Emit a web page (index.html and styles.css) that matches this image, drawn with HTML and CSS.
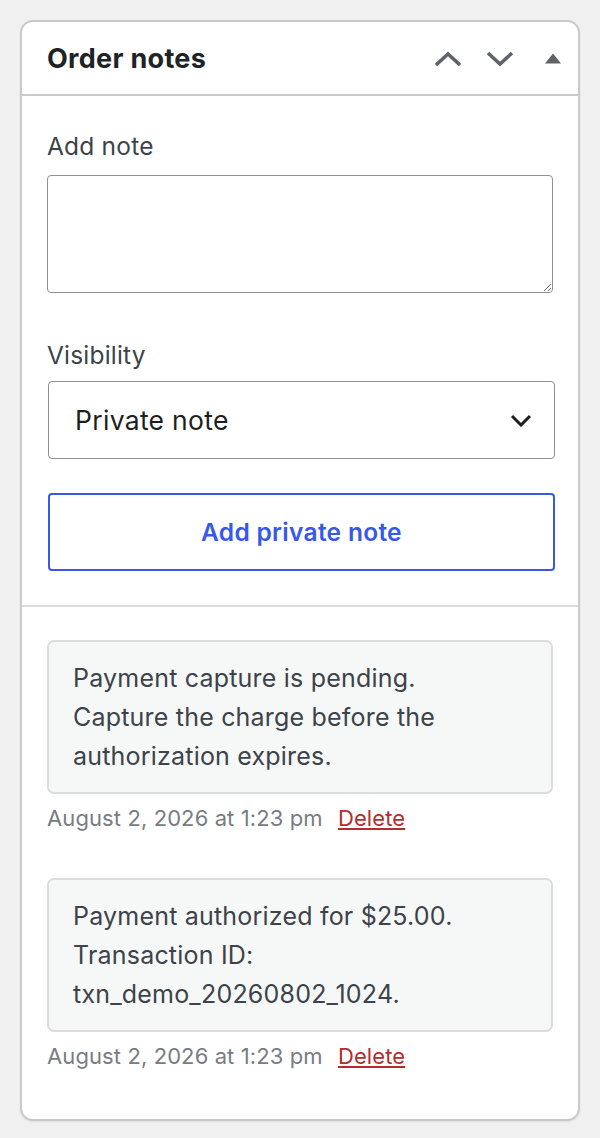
FILE: index.html
```html
<!DOCTYPE html>
<html lang="en">
<head>
<meta charset="utf-8">
<title>Order notes</title>
<link rel="stylesheet" href="styles.css">
</head>
<body>
<div class="card">
  <div class="card-header">
    <h2 class="card-title">Order notes</h2>
    <div class="header-actions">
      <button class="icon-btn" aria-label="Move up">
        <svg width="28" height="16" viewBox="0 0 28 16"><path d="M2 14 L14 3 L26 14" fill="none" stroke="#5f646b" stroke-width="3.6"/></svg>
      </button>
      <button class="icon-btn" aria-label="Move down">
        <svg width="28" height="16" viewBox="0 0 28 16"><path d="M2 2 L14 13 L26 2" fill="none" stroke="#5f646b" stroke-width="3.6"/></svg>
      </button>
      <button class="icon-btn tri" aria-label="Toggle panel">
        <svg width="16" height="11" viewBox="0 0 16 11"><path d="M8 0.5 L16 10.5 L0 10.5 Z" fill="#5f646b"/></svg>
      </button>
    </div>
  </div>

  <div class="card-body">
    <label class="field-label" for="note">Add note</label>
    <textarea id="note" class="note-input"></textarea>

    <label class="field-label vis-label" for="vis">Visibility</label>
    <div class="select">
      <span class="select-value">Private note</span>
      <svg class="select-chevron" width="22" height="13" viewBox="0 0 22 13"><path d="M2 2 L11 11 L20 2" fill="none" stroke="#1e1e1e" stroke-width="3"/></svg>
    </div>

    <button class="add-btn">Add private note</button>
  </div>

  <ul class="notes">
    <li class="note">
      <div class="note-content">Payment capture is pending.<br>Capture the charge before the authorization expires.</div>
      <p class="note-meta">August 2, 2026 at 1:23 pm <a href="#" class="delete">Delete</a></p>
    </li>
    <li class="note">
      <div class="note-content">Payment authorized for $25.00.<br>Transaction ID:<br>txn_demo_20260802_1024.</div>
      <p class="note-meta">August 2, 2026 at 1:23 pm <a href="#" class="delete">Delete</a></p>
    </li>
  </ul>
</div>
</body>
</html>
```

FILE: styles.css
```css
* {
  box-sizing: border-box;
}

body {
  margin: 0;
  background: #f0f0f1;
  font-family: Inter, "Noto Sans", "Liberation Sans", sans-serif;
  padding: 20px 20px 21px 20px;
}

.card {
  background: #fff;
  border: 2px solid #c9cacd;
  border-radius: 13px;
  box-shadow: 0 1px 2px rgba(0, 0, 0, 0.08);
}

.card-header {
  height: 74px;
  border-bottom: 2px solid #c9cacd;
  display: flex;
  align-items: center;
  justify-content: space-between;
  padding: 0 17px 0 25px;
}

.card-title {
  margin: 0;
  font-size: 27px;
  font-weight: 700;
  color: #1d2327;
  letter-spacing: 0.3px;
}

.header-actions {
  display: flex;
  align-items: center;
  gap: 24px;
  margin-top: 2px;
}

.icon-btn {
  background: none;
  border: 0;
  padding: 0;
  display: flex;
  align-items: center;
}

.icon-btn.tri {
  margin-left: 7px;
  margin-top: -2px;
}

.card-body {
  padding: 36px 23px 34px 25px;
  border-bottom: 2px solid #dcdcde;
}

.field-label {
  display: block;
  font-size: 24.5px;
  line-height: 29px;
  color: #3c434a;
  letter-spacing: 0.2px;
}

.note-input {
  display: block;
  width: 506px;
  height: 118px;
  margin-top: 14px;
  border: 1.5px solid #8c8f94;
  border-radius: 4px;
  resize: vertical;
  font-family: inherit;
  font-size: 20px;
}

.vis-label {
  margin-top: 48px;
}

.select {
  margin-top: 11px;
  margin-left: 1px;
  height: 78px;
  border: 1.5px solid #8c8f94;
  border-radius: 4px;
  display: flex;
  align-items: center;
  justify-content: space-between;
  padding: 0 22px 0 26px;
}

.select-value {
  font-size: 26.5px;
  color: #1e1e1e;
  letter-spacing: 0.3px;
}

.add-btn {
  display: block;
  width: calc(100% - 1px);
  margin: 34px 0 0 1px;
  height: 78px;
  background: #fff;
  border: 2px solid #3858e9;
  border-radius: 4px;
  color: #3858e9;
  font-family: inherit;
  font-size: 24.5px;
  font-weight: 600;
  letter-spacing: 0.3px;
}

.notes {
  list-style: none;
  margin: 0;
  padding: 33px 25px 49px 25px;
}

.note + .note {
  margin-top: 46px;
}

.note-content {
  background: #f6f7f7;
  border: 2px solid #dcdcde;
  border-radius: 7px;
  padding: 17px 30px 16px 24px;
  font-size: 25px;
  line-height: 39px;
  color: #3c434a;
  letter-spacing: 0.2px;
}

.note-meta {
  margin: 10px 0 0 0;
  font-size: 22px;
  line-height: 28px;
  color: #787c82;
  letter-spacing: 0.1px;
}

.delete {
  color: #b32d2e;
  margin-left: 9px;
}
```
